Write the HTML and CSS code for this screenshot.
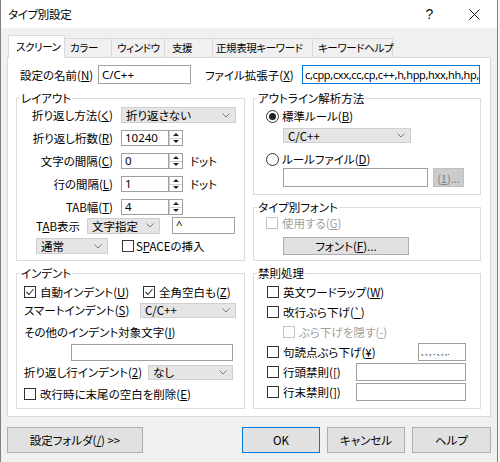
FILE: index.html
```html
<!DOCTYPE html>
<html lang="ja">
<head>
<meta charset="utf-8">
<title>タイプ別設定</title>
<link rel="stylesheet" href="styles.css">
</head>
<body>
<div class="win">
  <div class="titlebar">
    <span class="title">タイプ別設定</span>
    <span class="tb-btn tb-help">?</span>
    <span class="tb-btn tb-close"><svg width="11" height="11" viewBox="0 0 11 11"><path d="M0.5 0.5 L10.5 10.5 M10.5 0.5 L0.5 10.5" stroke="#111" stroke-width="1" fill="none"/></svg></span>
  </div>
  <div class="body">
    <div class="tabs">
      <div class="tab active t1">スクリーン</div>
      <div class="tab t2">カラー</div>
      <div class="tab t3">ウィンドウ</div>
      <div class="tab t4">支援</div>
      <div class="tab t5">正規表現キーワード</div>
      <div class="tab t6">キーワードヘルプ</div>
    </div>
    <div class="panel">
      <div class="toprow">
        <span class="lbl-name">設定の名前(<u>N</u>)</span>
        <div class="edit e-name">C/C++</div>
        <span class="lbl-ext">ファイル拡張子(<u>X</u>)</span>
        <div class="edit e-ext focus">c,cpp,cxx,cc,cp,c++,h,hpp,hxx,hh,hp,h++</div>
      </div>
      <div class="cols">
        <div class="col col-left">
          <div class="group g-layout">
            <span class="gtitle">レイアウト</span>
            <div class="lrow first"><span class="lab">折り返し方法(<u>く</u>)</span><div class="combo c-wrap"><span class="ctext">折り返さない</span><svg class="chev" width="8" height="5" viewBox="0 0 8 5"><path d="M0.5 0.5 L4 4 L7.5 0.5" fill="none" stroke="#777"/></svg></div></div>
            <div class="lrow"><span class="lab">折り返し桁数(<u>R</u>)</span><div class="spinbox"><div class="edit e-spin">10240</div><div class="spin"><span class="sp up"></span><span class="sp dn"></span></div></div></div>
            <div class="lrow"><span class="lab">文字の間隔(<u>C</u>)</span><div class="spinbox"><div class="edit e-spin">0</div><div class="spin"><span class="sp up"></span><span class="sp dn"></span></div></div><span class="unit">ドット</span></div>
            <div class="lrow"><span class="lab">行の間隔(<u>L</u>)</span><div class="spinbox"><div class="edit e-spin">1</div><div class="spin"><span class="sp up"></span><span class="sp dn"></span></div></div><span class="unit">ドット</span></div>
            <div class="lrow"><span class="lab">TAB幅(<u>T</u>)</span><div class="spinbox"><div class="edit e-spin">4</div><div class="spin"><span class="sp up"></span><span class="sp dn"></span></div></div></div>
            <div class="lrow r-tab"><span class="lab-tab">T<u>A</u>B表示</span><div class="combo c-tab"><span class="ctext">文字指定</span><svg class="chev" width="8" height="5" viewBox="0 0 8 5"><path d="M0.5 0.5 L4 4 L7.5 0.5" fill="none" stroke="#777"/></svg></div><div class="edit e-caret">^</div></div>
            <div class="lrow r-norm"><div class="combo c-norm"><span class="ctext">通常</span><svg class="chev" width="8" height="5" viewBox="0 0 8 5"><path d="M0.5 0.5 L4 4 L7.5 0.5" fill="none" stroke="#777"/></svg></div><i class="cb cb-space"></i><span>S<u>P</u>ACEの挿入</span></div>
          </div>
          <div class="group g-indent">
            <span class="gtitle">インデント</span>
            <div class="irow i1"><span class="citem"><i class="cb on"><svg width="10" height="10" viewBox="0 0 10 10"><path d="M1.5 5 L4 7.5 L8.5 2" fill="none" stroke="#333" stroke-width="1.1"/></svg></i><span>自動インデント(<u>U</u>)</span></span><span class="citem"><i class="cb on"><svg width="10" height="10" viewBox="0 0 10 10"><path d="M1.5 5 L4 7.5 L8.5 2" fill="none" stroke="#333" stroke-width="1.1"/></svg></i><span>全角空白も(<u>Z</u>)</span></span></div>
            <div class="irow i2"><span class="ilab w-smart">スマートインデント(<u>S</u>)</span><div class="combo c-smart"><span class="ctext">C/C++</span><svg class="chev" width="8" height="5" viewBox="0 0 8 5"><path d="M0.5 0.5 L4 4 L7.5 0.5" fill="none" stroke="#777"/></svg></div></div>
            <div class="irow i3"><span>その他のインデント対象文字(<u>I</u>)</span></div>
            <div class="irow i4"><div class="edit e-other"></div></div>
            <div class="irow i5"><span class="ilab w-wrap">折り返し行インデント(<u>2</u>)</span><div class="combo c-nashi"><span class="ctext">なし</span><svg class="chev" width="8" height="5" viewBox="0 0 8 5"><path d="M0.5 0.5 L4 4 L7.5 0.5" fill="none" stroke="#777"/></svg></div></div>
            <div class="irow i6"><i class="cb"></i><span>改行時に末尾の空白を削除(<u>E</u>)</span></div>
          </div>
        </div>
        <div class="col col-right">
          <div class="group g-outline">
            <span class="gtitle">アウトライン解析方法</span>
            <div class="orow o1"><i class="rb on"></i><span>標準ルール(<u>B</u>)</span></div>
            <div class="combo c-rule"><span class="ctext">C/C++</span><svg class="chev" width="8" height="5" viewBox="0 0 8 5"><path d="M0.5 0.5 L4 4 L7.5 0.5" fill="none" stroke="#777"/></svg></div>
            <div class="orow o2"><i class="rb"></i><span>ルールファイル(<u>D</u>)</span></div>
            <div class="frow"><div class="edit e-rfile"></div><div class="btn b-dis">(<u>1</u>)...</div></div>
          </div>
          <div class="group g-font">
            <span class="gtitle">タイプ別フォント</span>
            <div class="orow f1 dis"><i class="cb"></i><span>使用する(<u>G</u>)</span></div>
            <div class="btn b-font">フォント(<u>F</u>)...</div>
          </div>
          <div class="group g-kin">
            <span class="gtitle">禁則処理</span>
            <div class="krow"><i class="cb"></i><span>英文ワードラップ(<u>W</u>)</span></div>
            <div class="krow"><i class="cb"></i><span>改行ぶら下げ(<u>`</u>)</span></div>
            <div class="krow sub dis"><i class="cb"></i><span>ぶら下げを隠す(<u>-</u>)</span></div>
            <div class="krow"><i class="cb"></i><span>句読点ぶら下げ(<u>¥</u>)</span><div class="edit e-kuten">、。，．､｡,.</div></div>
            <div class="krow"><i class="cb"></i><span>行頭禁則(<u>[</u>)</span><div class="edit e-kin"></div></div>
            <div class="krow"><i class="cb"></i><span>行末禁則(<u>]</u>)</span><div class="edit e-kin"></div></div>
          </div>
        </div>
      </div>
    </div>
    <div class="buttons">
      <div class="btn b-folder">設定フォルダ(<u>/</u>) &gt;&gt;</div>
      <div class="btn b-ok">OK</div>
      <div class="btn b-cancel">キャンセル</div>
      <div class="btn b-help">ヘルプ</div>
    </div>
  </div>
</div>
</body>
</html>
```
FILE: styles.css
```css
* { box-sizing: border-box; }
html, body { margin: 0; padding: 0; }
body {
  width: 500px;
  height: 462px;
  overflow: hidden;
  background: #f4f4f4;
  font-family: "Noto Sans CJK JP", "Noto Sans", sans-serif;
  font-size: 11.5px;
  color: #000;
  font-feature-settings: "palt" 1;
}
u { text-decoration: underline; text-underline-offset: 1px; }

.win {
  width: 498px;
  height: 462px;
  border-left: 1px solid #808080;
  border-right: 1px solid #808080;
  background: #f0f0f0;
  display: flex;
  flex-direction: column;
}

/* title bar */
.titlebar {
  height: 28px;
  background: #fff;
  display: flex;
  align-items: center;
  padding-left: 7px;
  flex: none;
}
.title { flex: 1; font-size: 11.5px; line-height: 28px; letter-spacing: -0.3px; }
.tb-btn {
  height: 28px;
  display: flex;
  align-items: center;
  justify-content: center;
}
.tb-help { width: 43px; font-size: 14px; font-family: "Liberation Sans", sans-serif; color: #111; }
.tb-close { width: 46px; }

/* body */
.body {
  flex: 1;
  padding: 7px 6px 0 6px;
  display: flex;
  flex-direction: column;
}

.tabs {
  display: flex;
  align-items: flex-end;
  height: 22px;
  padding-left: 1px;
  position: relative;
  z-index: 1;
}
.tab {
  height: 19px;
  line-height: 17px;
  border: 1px solid #d9d9d9;
  border-bottom: none;
  margin-left: -1px;
  padding-left: 5px;
  background: #f0f0f0;
  white-space: nowrap;
  font-size: 10.5px;
  letter-spacing: -0.4px;
}
.tab.active {
  height: 23px;
  line-height: 21px;
  background: #fff;
  margin-bottom: -1px;
  margin-left: 0;
  padding-left: 7px;
  position: relative;
  z-index: 2;
}
.t1 { width: 57px; }
.t2 { width: 48px; }
.t3 { width: 54px; }
.t4 { width: 49px; padding-left: 7px; }
.t5 { width: 101px; padding-left: 3px; }
.t6 { width: 81px; }

.panel {
  height: 360px;
  background: #fff;
  border: 1px solid #d9d9d9;
  padding: 7px 9px 0 8px;
}

.toprow {
  display: flex;
  align-items: center;
  height: 19px;
  padding-left: 4px;
}
.lbl-name { width: 78px; white-space: nowrap; }
.lbl-ext { width: 97px; margin-left: 14px; white-space: nowrap; }

.edit {
  height: 19px;
  border: 1px solid #a0a0a0;
  background: #fff;
  padding-left: 3px;
  line-height: 17px;
  white-space: nowrap;
  overflow: hidden;
  font-family: "Noto Sans", "Noto Sans CJK JP", sans-serif;
  font-size: 11.5px;
}
.e-name { width: 93px; }
.e-ext { width: 178px; padding-left: 2px; font-size: 11px; letter-spacing: -0.35px; }
.edit.focus { border-color: #0078d7; }

.cols {
  display: flex;
  margin-top: 14px;
  gap: 8px;
}
.col { display: flex; flex-direction: column; gap: 12px; }
.col-left { width: 229px; }
.col-right { width: 228px; }

.group {
  position: relative;
  border: 1px solid #dcdcdc;
}
.gtitle {
  position: absolute;
  top: -8px;
  left: 3px;
  background: #fff;
  padding: 0 1px;
  line-height: 14px;
  white-space: nowrap;
}

/* combo boxes */
.combo {
  display: flex;
  align-items: center;
  height: 16px;
  background: #e5e5e5;
  border: 1px solid #cfcfcf;
  padding: 0 5px 0 4px;
}
.ctext { flex: 1; line-height: 14px; white-space: nowrap; }
.chev { flex: none; }

/* checkbox / radio */
.cb {
  display: inline-flex;
  align-items: center;
  justify-content: center;
  width: 12px;
  height: 12px;
  border: 1px solid #333;
  background: #fff;
  flex: none;
  margin-right: 4px;
}
.dis { color: #a0a0a0; }
.dis .cb { border-color: #c4c4c4; }
.rb {
  display: inline-flex;
  align-items: center;
  justify-content: center;
  width: 13px;
  height: 13px;
  border: 1px solid #333;
  border-radius: 50%;
  background: #fff;
  flex: none;
  margin-right: 3px;
}
.rb.on::after {
  content: "";
  width: 7px;
  height: 7px;
  border-radius: 50%;
  background: #222;
}

/* layout group */
.g-layout { height: 163px; padding-top: 8px; }
.lrow {
  display: flex;
  align-items: center;
  height: 16px;
  margin-top: 7px;
  white-space: nowrap;
}
.lrow.first { margin-top: 0; }
.lab { width: 96px; text-align: right; margin-right: 8px; }
.c-wrap { width: 115px; }
.spinbox { display: flex; height: 16px; }
.e-spin { width: 48px; height: 16px; line-height: 14px; }
.spin {
  width: 14px;
  height: 16px;
  border: 1px solid #a0a0a0;
  border-left: none;
  display: flex;
  flex-direction: column;
  background: #fff;
}
.sp {
  flex: 1;
  display: flex;
  align-items: center;
  justify-content: center;
  border-left: 1px solid #d0d0d0;
}
.sp.up { border-bottom: 1px solid #d0d0d0; }
.sp.up::after {
  content: "";
  border-left: 3px solid transparent;
  border-right: 3px solid transparent;
  border-bottom: 3px solid #222;
}
.sp.dn::after {
  content: "";
  border-left: 3px solid transparent;
  border-right: 3px solid transparent;
  border-top: 3px solid #222;
}
.unit { margin-left: 7px; }
.r-tab { margin-top: 2px; height: 17px; padding-left: 19px; }
.lab-tab { width: 51px; }
.c-tab { width: 73px; }
.e-caret { width: 63px; height: 17px; margin-left: 12px; line-height: 13px; }
.r-norm { margin-top: 4px; padding-left: 19px; }
.c-norm { width: 72px; }
.cb-space { margin-left: 14px; margin-right: 2px; }

/* indent group */
.g-indent { height: 136px; padding-top: 8px; }
.irow {
  display: flex;
  align-items: center;
  white-space: nowrap;
  padding-left: 7px;
}
.i1 { height: 20px; }
.citem { display: flex; align-items: center; }
.citem:first-child { width: 119px; }
.i2 { height: 16px; }
.w-smart { width: 116px; }
.c-smart { width: 96px; height: 15px; }
.i3 { height: 20px; margin-top: 4px; }
.i4 { height: 17px; margin-top: 2px; padding-left: 54px; }
.e-other { width: 162px; height: 17px; }
.i5 { height: 16px; margin-top: 3px; }
.w-wrap { width: 124px; }
.c-nashi { width: 85px; height: 15px; }
.i6 { height: 20px; margin-top: 4px; }

/* outline group */
.g-outline { height: 97px; padding-top: 9px; }
.orow {
  display: flex;
  align-items: center;
  height: 16px;
  padding-left: 12px;
  white-space: nowrap;
}
.c-rule { width: 128px; height: 15px; margin: 4px 0 0 29px; }
.o2 { margin-top: 8px; }
.frow { display: flex; margin: 1px 0 0 29px; height: 19px; }
.e-rfile { width: 145px; }
.btn {
  display: flex;
  align-items: center;
  justify-content: center;
  background: #e1e1e1;
  border: 1px solid #adadad;
  white-space: nowrap;
}
.b-dis {
  width: 31px;
  height: 19px;
  margin-left: 5px;
  background: #cccccc;
  border-color: #bfbfbf;
  color: #838383;
  font-size: 11px;
}

/* font group */
.g-font { height: 54px; padding-top: 6px; }
.f1 { height: 17px; }
.b-font { width: 126px; height: 18px; margin: 6px 0 0 29px; }

/* kinsoku group */
.g-kin { height: 136px; padding-top: 8px; }
.krow {
  display: flex;
  align-items: center;
  height: 20px;
  padding-left: 13px;
  padding-right: 14px;
  white-space: nowrap;
}
.krow.sub { padding-left: 29px; }
.e-kuten {
  width: 48px;
  height: 18px;
  margin-left: auto;
  font-size: 7px;
  line-height: 16px;
  padding-left: 2px;
  letter-spacing: 0.5px;
  font-family: "Noto Sans CJK JP", sans-serif;
}
.e-kin { width: 110px; height: 18px; margin-left: auto; }

/* bottom buttons */
.buttons {
  display: flex;
  margin-top: 10px;
  height: 26px;
}
.btn.b-folder { width: 136px; }
.b-ok { width: 78px; margin-left: auto; border-color: #0078d7; }
.b-cancel { width: 78px; margin-left: 7px; }
.b-help { width: 79px; margin-left: 7px; }
```
